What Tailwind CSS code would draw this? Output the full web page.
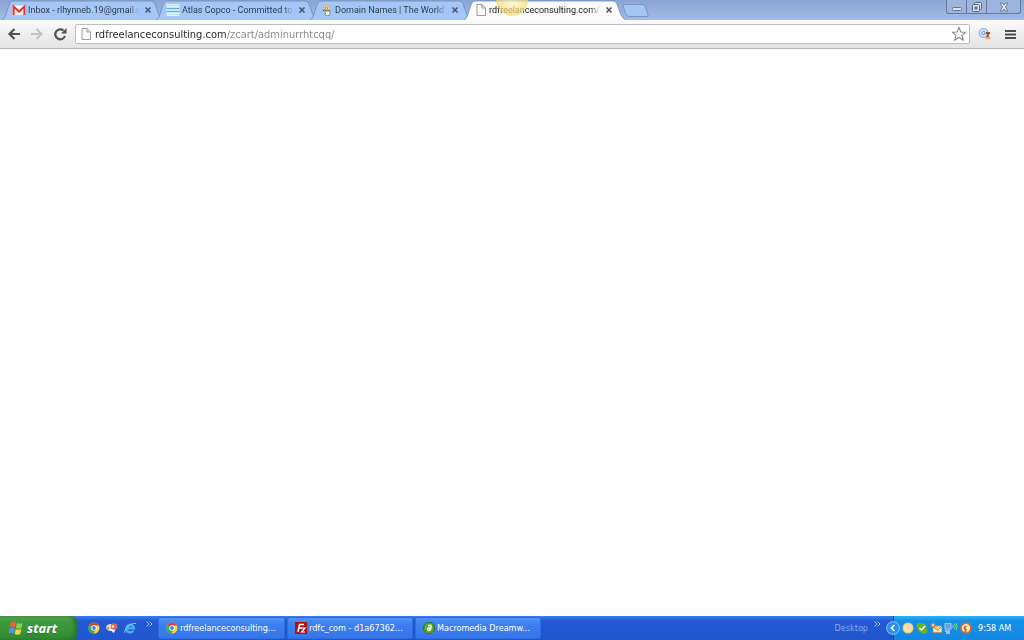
<!DOCTYPE html>
<html lang="en">
<head>
    <meta charset="UTF-8">
    <title>rdfreelanceconsulting.com/zcart/adminurrhtcqq/</title>
    <script src="https://cdn.jsdelivr.net/npm/@tailwindcss/browser@4"></script>
</head>
<body class="h-screen flex flex-col overflow-hidden bg-white font-['DejaVu_Sans_Condensed','Noto_Sans',sans-serif] text-[9px] leading-3">

    <!-- Shared shapes -->
    <svg class="hidden">
        <symbol id="tab" viewBox="0 0 162 20" preserveAspectRatio="none">
            <path d="M0 20 C2 19 3 17 4 14 L7 5 Q8 1 11 1 H149 Q152 1 153 4 L157 15 Q159 19 162 20 Z" fill="currentColor"/>
            <path d="M0 20 C2 19 3 17 4 14 L7 5 Q8 1 11 1 H149 Q152 1 153 4 L157 15 Q159 19 162 20" fill="none" stroke="#7189ad" stroke-width=".8"/>
        </symbol>
        <symbol id="cross" viewBox="0 0 8 8">
            <path d="M1.5 1.5 L6.5 6.5 M6.5 1.5 L1.5 6.5" stroke="#4b5360" stroke-width="1.5"/>
        </symbol>
        <symbol id="page" viewBox="0 0 10 12">
            <path d="M1 .5 H6 L9.5 4 V11.5 H1 Z" fill="#fafafa" stroke="#929292" stroke-width=".9"/>
            <path d="M6 .5 V4 H9.5" fill="none" stroke="#929292" stroke-width=".9"/>
        </symbol>
        <symbol id="chrome" viewBox="0 0 12 12">
            <circle cx="6" cy="6" r="5.5" fill="#ffd23c"/>
            <path d="M6 6 L1.2 3.2 A5.5 5.5 0 0 1 11 3.6 H6 Z" fill="#e2402f"/>
            <path d="M1.2 3.2 A5.5 5.5 0 0 0 5.6 11.5 L8 7.4 L6 6 Z" fill="#3fae49"/>
            <circle cx="6" cy="6" r="2.7" fill="#fff"/>
            <circle cx="6" cy="6" r="1.9" fill="#3f83e6"/>
        </symbol>
        <symbol id="more" viewBox="0 0 7 6">
            <path d="M.5 .5 L3 3 L.5 5.5 M3.5 .5 L6 3 L3.5 5.5" fill="none" stroke="#a9c8fa"/>
        </symbol>
    </svg>

    <!-- Tab strip -->
    <header class="relative h-5 shrink-0 flex items-start bg-linear-to-b from-[#8aa6d6] to-[#a3bbe5] pl-[2px]">
        <nav class="flex h-5 font-[Roboto,'Noto_Sans',sans-serif]">
            <div class="relative w-[162px] h-5 flex items-center pl-[10px] text-[#a3c6f7]">
                <svg class="absolute inset-0 w-full h-full"><use href="#tab"/></svg>
                <svg class="relative w-[14px] h-3 shrink-0" viewBox="0 0 14 12">
                    <rect x=".5" y="1.5" width="13" height="9.5" fill="#fbf6f5"/>
                    <path d="M2 11 L7 6 L12 11" fill="none" stroke="#d9c6c4" stroke-width=".7"/>
                    <path d="M1.6 11 V2.5 L7 7.6 L12.4 2.5 V11" fill="none" stroke="#df3b32" stroke-width="2"/>
                </svg>
                <a href="#" class="relative ml-[2px] w-[112px] whitespace-nowrap text-[#2f3b4d] mask-r-from-90%">Inbox - rlhynneb.19@gmail.c</a>
                <button class="relative ml-1" aria-label="Close tab"><svg class="w-2 h-2"><use href="#cross"/></svg></button>
            </div>
            <div class="relative w-[162px] h-5 -ml-2 flex items-center pl-[10px] text-[#a3c6f7]">
                <svg class="absolute inset-0 w-full h-full"><use href="#tab"/></svg>
                <svg class="relative w-[14px] h-3 shrink-0" viewBox="0 0 14 12">
                    <rect x=".5" width="13" height="12" fill="#eef7fc"/>
                    <path d="M.5 1.5 H13.5 M.5 10.5 H13.5" stroke="#c0e0f0" stroke-width="1.4"/>
                    <path d="M.5 4.5 H13.5 M.5 7.5 H13.5" stroke="#58b2d8" stroke-width="1.5"/>
                </svg>
                <a href="#" class="relative ml-[2px] w-[112px] whitespace-nowrap text-[#2f3b4d] mask-r-from-90%">Atlas Copco - Committed to s</a>
                <button class="relative ml-1" aria-label="Close tab"><svg class="w-2 h-2"><use href="#cross"/></svg></button>
            </div>
            <div class="relative w-[162px] h-5 -ml-2 flex items-center pl-[10px] text-[#a3c6f7]">
                <svg class="absolute inset-0 w-full h-full"><use href="#tab"/></svg>
                <svg class="relative w-[14px] h-3 shrink-0" viewBox="0 0 14 12">
                    <path d="M3 1 L5 2 L6 0 L8 2 L10 2 L9 5 L4 5 Z" fill="#edae6b"/>
                    <circle cx="6.5" cy="4.5" r="2.3" fill="#f6dfbf"/>
                    <path d="M3.5 5 L10 6 L10.5 8 L5 7.5 Z" fill="#69a533"/>
                    <path d="M5 7 H10 L9.5 11.5 H5.5 Z" fill="#f6f3e8" stroke="#77776a" stroke-width=".7"/>
                    <path d="M5 4 H6 M7 4 H8 M3 6 L4 7" stroke="#4a3b2a"/>
                </svg>
                <a href="#" class="relative ml-px w-[112px] whitespace-nowrap text-[#2f3b4d] mask-r-from-90%">Domain Names | The World's</a>
                <button class="relative ml-1" aria-label="Close tab"><svg class="w-2 h-2"><use href="#cross"/></svg></button>
            </div>
            <div class="relative w-[162px] h-5 -ml-2 flex items-center pl-[10px] text-[#fafafa]">
                <svg class="absolute inset-0 w-full h-full"><use href="#tab"/></svg>
                <svg class="relative w-[14px] h-3 shrink-0"><use href="#page"/></svg>
                <a href="#" class="relative ml-px w-[112px] whitespace-nowrap text-[#222] mask-r-from-90%">rdfreelanceconsulting.com/zc</a>
                <button class="relative ml-1" aria-label="Close tab"><svg class="w-2 h-2"><use href="#cross"/></svg></button>
                <!-- Pointer highlight -->
                <span class="absolute left-8 top-0 w-8 h-4 rounded-b-full bg-radial-[at_50%_0%] from-[#fdf5c4]/70 to-[#f0cd3c]/70"></span>
            </div>
            <button class="mt-1 -ml-1 w-[27px] h-[13px]" aria-label="New tab">
                <svg class="w-[27px] h-[13px]" viewBox="0 0 27 13"><path d="M3 .5 H21 Q22 .5 23 2 L26 10.5 Q26.5 12.5 25 12.5 H7 Q5 12.5 4 10.5 L1 2 Q1 .5 3 .5 Z" fill="#a3c6f7" stroke="#7189ad" stroke-width=".8"/></svg>
            </button>
        </nav>
        <div class="ml-auto mr-[3px] h-[14px] flex rounded-b-[3px] border border-t-0 border-[#66789c] bg-[#9db5de] divide-x divide-[#66789c]">
            <button class="w-5 flex justify-center items-center" aria-label="Minimize">
                <svg class="w-3 h-3" viewBox="0 0 12 12"><rect x="1.5" y="6.5" width="9" height="3" rx="1" fill="#dde3ee" stroke="#66748e"/></svg>
            </button>
            <button class="w-5 flex justify-center items-center" aria-label="Restore">
                <svg class="w-3 h-3" viewBox="0 0 12 12" fill="#dde3ee" stroke="#56647e"><rect x="3.5" y="1.5" width="7" height="7" rx="1"/><rect x="1.5" y="3.5" width="7" height="7" rx="1"/><rect x="4" y="6" width="2" height="2" fill="#9db5de"/></svg>
            </button>
            <button class="w-[33px] flex justify-center items-center" aria-label="Close">
                <svg class="w-3 h-3" viewBox="0 0 12 12"><path d="M2 2 H4.5 L6 4 L7.5 2 H10 L7.5 6 L10 10 H7.5 L6 8 L4.5 10 H2 L4.5 6 Z" fill="#dde3ee" stroke="#66748e" stroke-width=".9"/></svg>
            </button>
        </div>
    </header>

    <!-- Toolbar -->
    <div class="h-[29px] shrink-0 flex items-center bg-linear-to-b from-[#fafafa] to-[#e4e4e4] border-b border-[#b4b4b4] pl-[7px] pr-2">
        <button aria-label="Back"><svg class="w-[14px] h-[14px]" viewBox="0 0 14 14"><path d="M13 7 H3 M7.5 2 L2.5 7 L7.5 12" fill="none" stroke="#505050" stroke-width="2.2"/></svg></button>
        <button class="ml-[9px]" aria-label="Forward"><svg class="w-[14px] h-[14px]" viewBox="0 0 14 14"><path d="M1 7 H11 M6.5 2 L11.5 7 L6.5 12" fill="none" stroke="#c2c2c2" stroke-width="2"/></svg></button>
        <button class="ml-[9px]" aria-label="Reload"><svg class="w-[14px] h-[14px]" viewBox="0 0 14 14"><path d="M12 9 A5 5 0 1 1 10.5 3.5" fill="none" stroke="#505050" stroke-width="2.2"/><path d="M13.5 1 V6.5 H8 Z" fill="#505050"/></svg></button>
        <div class="ml-2 h-5 grow flex items-center rounded-[2px] border border-[#bdbdbd] bg-white pl-[5px] pr-[2px]">
            <svg class="w-[10px] h-3 shrink-0"><use href="#page"/></svg>
            <input type="text" aria-label="Address" value="rdfreelanceconsulting.com/zcart/adminurrhtcqq/" class="ml-1 h-4 grow min-w-0 outline-none text-[11px] text-transparent bg-clip-text bg-[linear-gradient(90deg,#222_131px,#858585_131px)]">
            <button aria-label="Bookmark"><svg class="w-4 h-4" viewBox="0 0 16 16"><path d="M8 1.500 L9.900 6 L14.500 6.300 L11 9.400 L12.200 14 L8 11.500 L3.800 14 L5 9.400 L1.500 6.300 L6.100 6 Z" fill="#fff" stroke="#858585" stroke-width="1.100"/></svg></button>
        </div>
        <button class="ml-2" aria-label="Extension">
            <svg class="w-[14px] h-3" viewBox="0 0 14 12">
                <circle cx="5.5" cy="5" r="4.3" fill="#d5e4fc" stroke="#8bb5f5" stroke-width="1.3"/>
                <circle cx="5.500" cy="5" r="1.700" fill="none" stroke="#5b92e6"/>
                <path d="M8 4 H12 V6 L10.800 6.500 V8.500 L12.500 9.500 H7.500 L9 8 V6.500 L8 6 Z" fill="#a0522a"/>
                <path d="M7.500 10.500 H12.500" stroke="#f0b060" stroke-width="1.600"/>
            </svg>
        </button>
        <button class="ml-[13px]" aria-label="Menu"><svg class="w-[11px] h-[11px]" viewBox="0 0 11 11"><path d="M0 2 H11 M0 5.500 H11 M0 9 H11" stroke="#4c4c4c" stroke-width="2.200"/></svg></button>
    </div>

    <main class="grow"></main>

    <!-- Taskbar -->
    <footer class="h-6 shrink-0 flex items-stretch bg-linear-to-b from-[#3a80ee] via-[#2459d8] via-20% to-[#2055cb] text-white">
        <button class="w-[78px] flex items-center pl-2 rounded-r-[8px] bg-linear-to-b from-[#5eac5c] via-[#3c9a3c] via-25% to-[#338a34] shadow-[inset_-3px_0_4px_#27702a]">
            <svg class="w-4 h-4" viewBox="0 0 16 16">
                <path d="M3 2.500 Q5.500 1 8 2.500 L7 7.500 Q4.500 6 2 7.500 Z" fill="#f0603a"/>
                <path d="M9 3 Q11.500 4.500 14.500 3 L13.500 8 Q10.500 9.500 8 8 Z" fill="#8bd44a"/>
                <path d="M1.800 8.500 Q4.300 7 6.800 8.500 L5.800 13.500 Q3.300 12 .8 13.500 Z" fill="#5a90f0"/>
                <path d="M7.800 9 Q10.300 10.500 13.300 9 L12.300 14 Q9.300 15.500 6.800 14 Z" fill="#fbd23f"/>
            </svg>
            <span class="ml-[3px] font-['Open_Sans','Noto_Sans',sans-serif] font-bold italic text-[13px] leading-4 text-shadow-xs">start</span>
        </button>
        <div class="ml-[10px] flex items-center gap-[6px]">
            <button aria-label="Chrome"><svg class="w-3 h-3"><use href="#chrome"/></svg></button>
            <button aria-label="Paint">
                <svg class="w-3 h-3" viewBox="0 0 12 12"><ellipse cx="5" cy="5.500" rx="5" ry="3.500" fill="#ece4dc"/><circle cx="2" cy="6" r="1.500" fill="#c98a63"/><circle cx="8" cy="4.500" r="3.300" fill="#d9694b"/><circle cx="7" cy="4.500" r="1.200" fill="#fbeee6"/><path d="M4 7.500 L7.500 11 L9.500 8" fill="#f6efe8"/></svg>
            </button>
            <button aria-label="Internet Explorer">
                <svg class="w-[13px] h-3" viewBox="0 0 13 12" fill="none"><path d="M3.500 6.300 H10 A3.800 3.800 0 1 0 9.300 8.800" stroke="#46aef0" stroke-width="2.400"/><path d="M1 11 C-1 8 7 0 12 1.500" stroke="#7cc6f5"/></svg>
            </button>
            <button class="self-start mt-[5px] ml-[3px]" aria-label="More shortcuts"><svg class="w-[7px] h-[6px]"><use href="#more"/></svg></button>
        </div>
        <div class="ml-[5px] my-px flex gap-[2px]">
            <button class="w-[127px] flex items-center pl-[7px] rounded-[2px] border border-[#2f6be0] bg-linear-to-b from-[#5593f8] via-[#3d80f2] via-30% to-[#3675e8]">
                <svg class="w-3 h-3 shrink-0"><use href="#chrome"/></svg><span class="ml-[2px] whitespace-nowrap">rdfreelanceconsulting...</span>
            </button>
            <button class="w-[126px] flex items-center pl-[7px] rounded-[2px] border border-[#2f6be0] bg-linear-to-b from-[#5593f8] via-[#3d80f2] via-30% to-[#3675e8]">
                <svg class="w-3 h-3 shrink-0" viewBox="0 0 12 12"><rect width="12" height="12" fill="#b3110d"/><path d="M3 10 L4.500 2.500 H9 M3.500 6 H7" fill="none" stroke="#fff" stroke-width="1.600"/><path d="M6 6 H10 L6.500 10 H10" fill="none" stroke="#fff" stroke-width="1.200"/></svg>
                <span class="ml-[2px] whitespace-nowrap">rdfc_com - d1a67362...</span>
            </button>
            <button class="w-[126px] flex items-center pl-[7px] rounded-[2px] border border-[#2f6be0] bg-linear-to-b from-[#5593f8] via-[#3d80f2] via-30% to-[#3675e8]">
                <svg class="w-3 h-3 shrink-0" viewBox="0 0 12 12"><circle cx="6" cy="6" r="5.600" fill="#5da423" stroke="#2f6b16" stroke-width=".8"/><path d="M5 3.500 H8 Q8.500 8 5.500 8.500 Q3.500 7.500 5 6 H7.500" fill="none" stroke="#fff" stroke-width="1.300"/></svg>
                <span class="ml-[2px] whitespace-nowrap">Macromedia Dreamw...</span>
            </button>
        </div>
        <div class="ml-auto flex items-center text-[#86a9ee]">
            <span>Desktop</span>
            <button class="self-start mt-[5px] ml-[6px]" aria-label="More items"><svg class="w-[7px] h-[6px]"><use href="#more"/></svg></button>
        </div>
        <div class="relative ml-3 w-[131px] flex items-center gap-[2px] pl-2 border-l border-[#0e3c9c] bg-linear-to-b from-[#2fb2f6] via-[#1290e8] via-20% to-[#1487e0]">
            <button class="absolute -left-2 top-[5px]" aria-label="Hide icons">
                <svg class="w-[14px] h-[14px]" viewBox="0 0 14 14"><circle cx="7" cy="7" r="6.400" fill="#2f8cec" stroke="#a8d4fa" stroke-width=".8"/><path d="M8.500 4 L5.500 7 L8.500 10" fill="none" stroke="#fff" stroke-width="1.700"/></svg>
            </button>
            <svg class="w-3 h-3" viewBox="0 0 12 12"><circle cx="6" cy="6" r="5.500" fill="#f0cd80"/><circle cx="6" cy="6" r="4.200" fill="#f8e3ae"/><path d="M6 2.500 V6 H9.500" fill="none" stroke="#edc58a"/></svg>
            <svg class="w-3 h-3" viewBox="0 0 12 12"><path d="M1 1.500 Q4 .5 6 1.500 Q10 1.500 10.500 5.500 Q12.500 9 10 11.300 Q8 12 6 10.700 Q2 10.500 1.500 6.500 Q0 4 1 1.500 Z" fill="#69b51e"/><path d="M3.500 6 L5.500 8 L9 4" fill="none" stroke="#fff" stroke-width="1.500"/></svg>
            <svg class="w-3 h-3" viewBox="0 0 12 12"><rect x="3" y="4" width="9" height="6.500" fill="#fbe4b4" stroke="#c8833a" stroke-width=".7"/><path d="M3 4.500 L7.500 8 L12 4.500" fill="none" stroke="#b87535"/><path d="M3 0 V6 M0 3 H6 M1 1 L5 5 M5 1 L1 5" stroke="#ef7b35"/><circle cx="3" cy="3" r="1" fill="#fff3a0"/></svg>
            <svg class="w-[14px] h-3" viewBox="0 0 14 12" fill="none"><rect x="1" y="1.500" width="6" height="5.500" fill="#6d9ce0" stroke="#a9c6ee"/><path d="M1 9 H6 M2 11 H6" stroke="#c3d2e5" stroke-width="1.500"/><path d="M8.500 3 Q10 4.500 8.500 6 M10.500 2 Q12 4.500 10.500 7 M12 1 Q14.500 4.500 12 8" stroke="#79dc77"/></svg>
            <svg class="w-3 h-3" viewBox="0 0 12 12"><circle cx="6" cy="6" r="5.800" fill="#e56a1d"/><path d="M4.500 9 A3.300 3.300 0 1 1 7.500 9 V5.500 H6" fill="none" stroke="#fff" stroke-width="1.500"/></svg>
            <time class="ml-1 whitespace-nowrap">9:58 AM</time>
        </div>
    </footer>
</body>
</html>
